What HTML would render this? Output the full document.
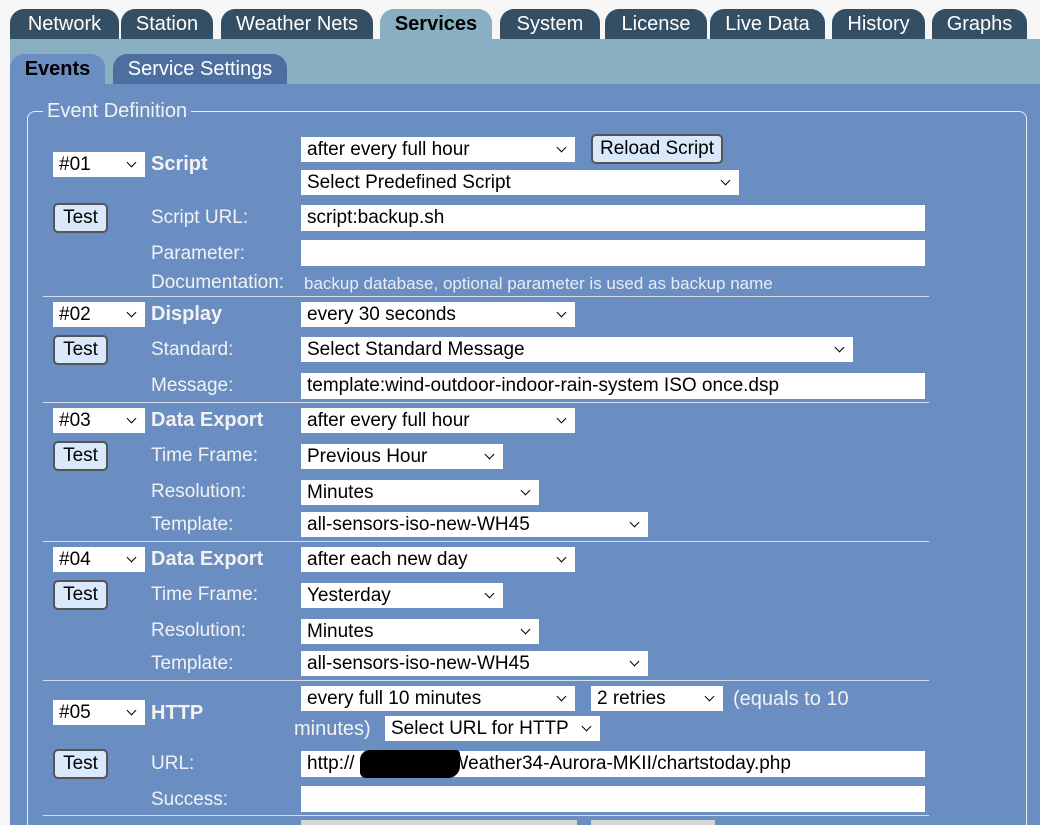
<!DOCTYPE html>
<html><head><meta charset="utf-8"><style>
*{box-sizing:border-box;margin:0;padding:0}
html,body{width:1040px;height:825px;overflow:hidden}
body{background:#f6f6f6;font-family:"Liberation Sans",sans-serif;position:relative}
.a{position:absolute}
.tab{position:absolute;top:9px;height:30px;background:#344e63;color:#fff;font-size:20px;text-align:center;line-height:31px;border-radius:14px 14px 0 0}
.lbl{position:absolute;color:#f2f2f2;font-size:19px;line-height:20px}
.b{font-weight:bold}
.sel,.inp{position:absolute;background:#fff;color:#000;font-size:19px;line-height:25px;height:25px;padding-left:6px;white-space:nowrap;overflow:hidden}
.sel::after{content:"";position:absolute;right:10px;top:7px;width:6px;height:6px;border-right:1.6px solid #000;border-bottom:1.6px solid #000;transform:rotate(45deg)}
.btn{position:absolute;background:#d9e9fb;border:2px solid #555;border-radius:5px;color:#000;font-size:19px;text-align:center;line-height:26px;height:30px}
.hr{position:absolute;left:43px;width:886px;height:1px;background:#d8dee8}
</style></head><body>
<div class="a" style="left:10px;top:39px;width:1030px;height:45px;background:#89b0c2"></div>
<div class="a" style="left:10px;top:84px;width:1030px;height:741px;background:#6b8ec2"></div>
<div class="tab" style="left:10px;width:109px">Network</div>
<div class="tab" style="left:121px;width:92px">Station</div>
<div class="tab" style="left:221px;width:152px">Weather Nets</div>
<div class="tab" style="left:380px;width:112px;background:#89b0c2;color:#000;font-weight:bold">Services</div>
<div class="tab" style="left:500px;width:100px">System</div>
<div class="tab" style="left:605px;width:102px">License</div>
<div class="tab" style="left:710px;width:115px">Live Data</div>
<div class="tab" style="left:832px;width:93px">History</div>
<div class="tab" style="left:932px;width:95px">Graphs</div>
<div class="tab" style="left:10px;top:54px;width:95px;background:#6b8ec2;color:#000;font-weight:bold">Events</div>
<div class="tab" style="left:113px;top:54px;width:174px;background:#4d6fa0">Service Settings</div>
<div class="a" style="left:27px;top:111px;width:1000px;height:730px;border:1px solid #e8eef6;border-radius:8px"></div>
<div class="lbl" style="left:43px;top:101px;background:#6b8ec2;padding:0 4px;font-size:20px">Event Definition</div>

<!-- row1 -->
<div class="sel" style="left:53px;top:152px;width:92px">#01</div>
<div class="lbl b" style="left:151px;top:154px;font-size:20px">Script</div>
<div class="sel" style="left:301px;top:137px;width:274px">after every full hour</div>
<div class="btn" style="left:591px;top:134px;width:132px">Reload Script</div>
<div class="sel" style="left:301px;top:170px;width:438px">Select Predefined Script</div>
<div class="btn" style="left:53px;top:203px;width:55px">Test</div>
<div class="lbl" style="left:151px;top:208px">Script URL:</div>
<div class="inp" style="left:301px;top:205px;width:624px;height:26px">script:backup.sh</div>
<div class="lbl" style="left:151px;top:244px">Parameter:</div>
<div class="inp" style="left:301px;top:240px;width:624px;height:26px"></div>
<div class="lbl" style="left:151px;top:273px">Documentation:</div>
<div class="lbl" style="left:304px;top:274px;font-size:17px;color:#e8ecf4">backup database, optional parameter is used as backup name</div>
<div class="hr" style="top:296px"></div>

<!-- row2 -->
<div class="sel" style="left:53px;top:302px;width:92px">#02</div>
<div class="lbl b" style="left:151px;top:304px;font-size:20px">Display</div>
<div class="sel" style="left:301px;top:302px;width:274px">every 30 seconds</div>
<div class="btn" style="left:53px;top:335px;width:55px">Test</div>
<div class="lbl" style="left:151px;top:340px">Standard:</div>
<div class="sel" style="left:301px;top:337px;width:552px">Select Standard Message</div>
<div class="lbl" style="left:151px;top:376px">Message:</div>
<div class="inp" style="left:301px;top:373px;width:624px;height:26px">template:wind-outdoor-indoor-rain-system ISO once.dsp</div>
<div class="hr" style="top:402px"></div>

<!-- row3 -->
<div class="sel" style="left:53px;top:408px;width:92px">#03</div>
<div class="lbl b" style="left:151px;top:410px;font-size:20px">Data Export</div>
<div class="sel" style="left:301px;top:408px;width:274px">after every full hour</div>
<div class="btn" style="left:53px;top:441px;width:55px">Test</div>
<div class="lbl" style="left:151px;top:446px">Time Frame:</div>
<div class="sel" style="left:301px;top:444px;width:202px">Previous Hour</div>
<div class="lbl" style="left:151px;top:482px">Resolution:</div>
<div class="sel" style="left:301px;top:480px;width:238px">Minutes</div>
<div class="lbl" style="left:151px;top:515px">Template:</div>
<div class="sel" style="left:301px;top:512px;width:347px">all-sensors-iso-new-WH45</div>
<div class="hr" style="top:541px"></div>

<!-- row4 -->
<div class="sel" style="left:53px;top:547px;width:92px">#04</div>
<div class="lbl b" style="left:151px;top:549px;font-size:20px">Data Export</div>
<div class="sel" style="left:301px;top:547px;width:274px">after each new day</div>
<div class="btn" style="left:53px;top:580px;width:55px">Test</div>
<div class="lbl" style="left:151px;top:585px">Time Frame:</div>
<div class="sel" style="left:301px;top:583px;width:202px">Yesterday</div>
<div class="lbl" style="left:151px;top:621px">Resolution:</div>
<div class="sel" style="left:301px;top:619px;width:238px">Minutes</div>
<div class="lbl" style="left:151px;top:654px">Template:</div>
<div class="sel" style="left:301px;top:651px;width:347px">all-sensors-iso-new-WH45</div>
<div class="hr" style="top:680px"></div>

<!-- row5 -->
<div class="sel" style="left:53px;top:700px;width:92px">#05</div>
<div class="lbl b" style="left:151px;top:703px;font-size:20px">HTTP</div>
<div class="sel" style="left:301px;top:686px;width:274px">every full 10 minutes</div>
<div class="sel" style="left:591px;top:686px;width:132px">2 retries</div>
<div class="lbl" style="left:733px;top:689px;font-size:20px">(equals to 10</div>
<div class="lbl" style="left:294px;top:719px;font-size:20px">minutes)</div>
<div class="sel" style="left:385px;top:716px;width:215px">Select URL for HTTP</div>
<div class="btn" style="left:53px;top:749px;width:55px">Test</div>
<div class="lbl" style="left:151px;top:754px">URL:</div>
<div class="inp" style="left:301px;top:751px;width:624px;height:26px">http://<span style="display:inline-block;width:96px"></span>Weather34-Aurora-MKII/chartstoday.php</div>
<div class="a" style="left:360px;top:750px;width:100px;height:28px;background:#000;border-radius:10px 4px 12px 6px"></div>
<div class="lbl" style="left:151px;top:790px">Success:</div>
<div class="inp" style="left:301px;top:786px;width:624px;height:26px"></div>
<div class="hr" style="top:815px"></div>
<div class="a" style="left:301px;top:820px;width:276px;height:5px;background:#d6d6d6"></div>
<div class="a" style="left:591px;top:820px;width:124px;height:5px;background:#d6d6d6"></div>
</body></html>
